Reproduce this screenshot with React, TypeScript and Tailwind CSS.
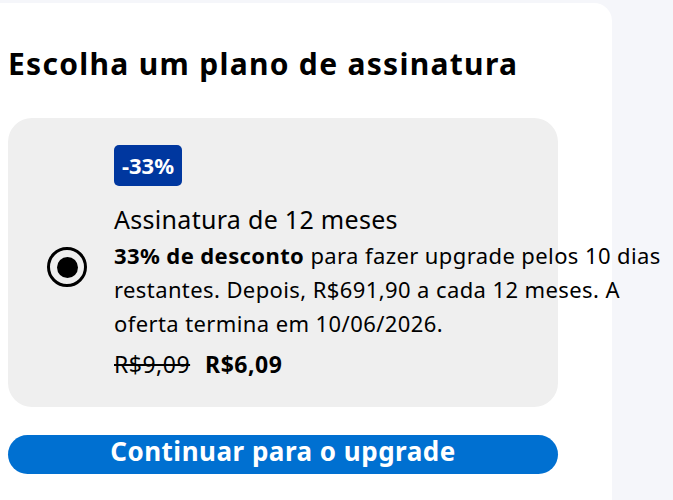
export default function App() {
  return (
    <div className="flex h-[500px] w-full bg-[#f5f6fa] font-['Noto_Sans',sans-serif] text-black overflow-hidden">
      <div className="mt-[3px] w-[612px] shrink-0 rounded-tr-[18px] bg-white pl-2 pr-[54px]">
        <h1 className="mt-[41px] text-[30px] font-bold leading-[40px] tracking-[1.3px]">
          Escolha um plano de assinatura
        </h1>

        {/* plan card */}
        <div className="mt-[34px] flex h-[289px] items-center rounded-[24px] bg-[#efefef]">
          <div className="ml-[39px] mr-[27px] mt-[9px] flex h-10 w-10 shrink-0 items-center justify-center rounded-full border-[3px] border-black">
            <div className="h-[21px] w-[21px] rounded-full bg-black" />
          </div>
          <div className="flex h-full flex-col pt-[27px]">
            <span className="w-fit rounded-[5px] bg-[#00379f] px-[8px] text-[22px] font-bold leading-[41px] text-white">
              -33%
            </span>
            <div className="mt-[18px] text-[25px] leading-[30px] tracking-[0.3px]">Assinatura de 12 meses</div>
            <p className="mt-[4px] whitespace-nowrap text-[22px] leading-[34px] tracking-[0.4px]">
              <b>33% de desconto</b> para fazer upgrade pelos 10 dias
              <br />
              restantes. Depois, R$691,90 a cada 12 meses. A
              <br />
              oferta termina em 10/06/2026.
            </p>
            <div className="mt-[7px] flex gap-[15px] text-[23px] leading-[34px] tracking-[0.5px]">
              <span className="line-through">R$9,09</span>
              <span className="font-bold">R$6,09</span>
            </div>
          </div>
        </div>

        <button className="mt-[28px] h-[39px] w-full rounded-full bg-[#0070d1] pb-[7px] text-[26px] font-bold leading-[32px] tracking-[0.5px] text-white">
          Continuar para o upgrade
        </button>
      </div>
    </div>
  );
}
